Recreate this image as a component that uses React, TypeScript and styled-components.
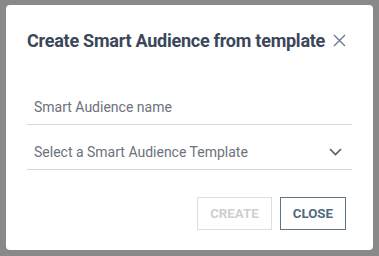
import React from "react";
import styled, { createGlobalStyle } from "styled-components";

const GlobalStyle = createGlobalStyle`
  html, body {
    margin: 0;
    padding: 0;
    background: #898989;
    font-family: Roboto, "Liberation Sans", sans-serif;
  }
`;

const Overlay = styled.div`
  width: 379px;
  height: 256px;
  padding: 5px 6px 6px 6px;
  box-sizing: border-box;
`;

const Dialog = styled.div`
  width: 367px;
  height: 245px;
  background: #fff;
  border-radius: 4px;
  box-sizing: border-box;
  padding: 23px 21px 0 21px;
  display: flex;
  flex-direction: column;
`;

const Header = styled.div`
  display: flex;
  align-items: center;
  justify-content: space-between;
  height: 24px;
`;

const Title = styled.h2`
  margin: 0;
  font-size: 18px;
  font-weight: 700;
  color: #3b4758;
  letter-spacing: -0.25px;
`;

const CloseIcon = styled.button`
  border: 0;
  background: none;
  padding: 0;
  margin-right: 6px;
  width: 13px;
  height: 13px;
  display: flex;
  cursor: pointer;
`;

const Field = styled.div<{ $top: number }>`
  margin-top: ${(p) => p.$top}px;
  height: 34px;
  border-bottom: 1px solid #d5d6db;
  display: flex;
  align-items: center;
  justify-content: space-between;
  padding: 0 10px 0 7px;
  font-size: 14px;
  color: #6c717b;
`;

const Actions = styled.div`
  margin-top: 27px;
  display: flex;
  justify-content: flex-end;
  gap: 8px;
  padding-right: 6px;
`;

const Button = styled.button<{ $disabled?: boolean }>`
  height: 33px;
  box-sizing: border-box;
  padding: 0 12px;
  background: #fff;
  font-family: Roboto, "Liberation Sans", sans-serif;
  font-size: 13.3px;
  font-weight: 700;
  border: 1px solid ${(p) => (p.$disabled ? "#dedede" : "#5f7585")};
  color: ${(p) => (p.$disabled ? "#cfcfcf" : "#4f6b7e")};
`;

export default function App() {
  return (
    <>
      <GlobalStyle />
      <Overlay>
        <Dialog>
          <Header>
            <Title>Create Smart Audience from template</Title>
            <CloseIcon aria-label="close">
              <svg width="13" height="13" viewBox="0 0 13 13">
                <path d="M1 1 L12 12 M12 1 L1 12" stroke="#6b7b8e" strokeWidth="1.4" />
              </svg>
            </CloseIcon>
          </Header>
          <Field $top={38}>Smart Audience name</Field>
          <Field $top={10}>
            <span>Select a Smart Audience Template</span>
            <svg width="13" height="8" viewBox="0 0 13 8">
              <path d="M1 1 L6.5 6.5 L12 1" stroke="#555d68" strokeWidth="1.6" fill="none" />
            </svg>
          </Field>
          <Actions>
            <Button $disabled>CREATE</Button>
            <Button>CLOSE</Button>
          </Actions>
        </Dialog>
      </Overlay>
    </>
  );
}
